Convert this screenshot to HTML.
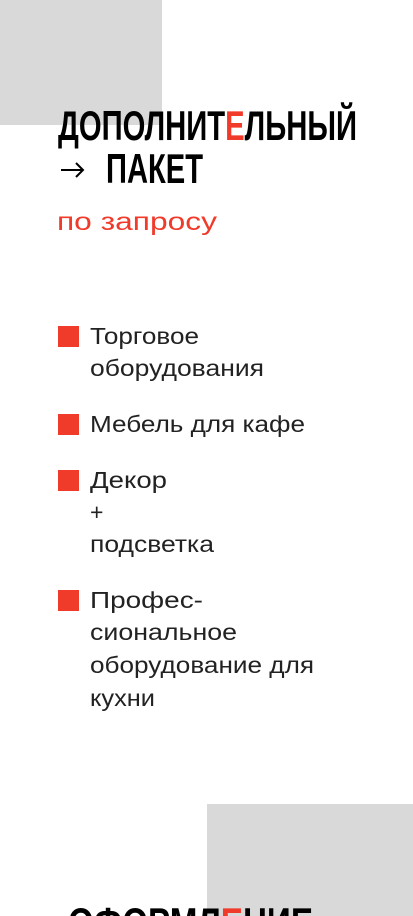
<!DOCTYPE html>
<html><head><meta charset="utf-8"><style>
html,body{margin:0;padding:0;background:#fff;width:413px;height:916px;overflow:hidden;}
svg{display:block}
</style></head><body>
<svg width="413" height="916" viewBox="0 0 413 916" xmlns="http://www.w3.org/2000/svg">
<rect x="0" y="0" width="162" height="125" fill="#d9d9d9"/>
<rect x="207" y="804" width="206" height="112" fill="#d9d9d9"/>
<g font-family="'Liberation Sans Narrow','Liberation Sans',sans-serif" font-weight="bold" font-size="42" fill="#000">
<text x="58" y="140" textLength="299" lengthAdjust="spacingAndGlyphs">ДОПОЛНИТ<tspan fill="#f03a2a">Е</tspan>ЛЬНЫЙ</text>
<text x="106" y="183" textLength="97" lengthAdjust="spacingAndGlyphs">ПАКЕТ</text>
<text x="68" y="937" textLength="245" lengthAdjust="spacingAndGlyphs">ОФОРМЛ<tspan fill="#f03a2a">Е</tspan>НИЕ</text>
</g>
<g stroke="#000" stroke-width="2" fill="none">
<line x1="61" y1="170" x2="83" y2="170"/>
<polyline points="76,163 83,170 76,177"/>
</g>
<text x="57" y="230" font-family="'Liberation Sans',sans-serif" font-size="25" fill="#f03a2a" textLength="160" lengthAdjust="spacingAndGlyphs">по запросу</text>
<g fill="#f03a2a">
<rect x="58" y="326" width="21" height="21"/>
<rect x="58" y="414" width="21" height="21"/>
<rect x="58" y="470" width="21" height="21"/>
<rect x="58" y="590" width="21" height="21"/>
</g>
<g font-family="'Liberation Sans',sans-serif" font-size="23" fill="#222" lengthAdjust="spacingAndGlyphs">
<text x="90" y="344" textLength="109" lengthAdjust="spacingAndGlyphs">Торговое</text>
<text x="90" y="376" textLength="174" lengthAdjust="spacingAndGlyphs">оборудования</text>
<text x="90" y="432" textLength="215" lengthAdjust="spacingAndGlyphs">Мебель для кафе</text>
<text x="90" y="488" textLength="77" lengthAdjust="spacingAndGlyphs">Декор</text>
<text x="90" y="520">+</text>
<text x="90" y="552" textLength="124" lengthAdjust="spacingAndGlyphs">подсветка</text>
<text x="90" y="608" textLength="113" lengthAdjust="spacingAndGlyphs">Профес-</text>
<text x="90" y="640" textLength="147" lengthAdjust="spacingAndGlyphs">сиональное</text>
<text x="90" y="673" textLength="224" lengthAdjust="spacingAndGlyphs">оборудование для</text>
<text x="90" y="706" textLength="65" lengthAdjust="spacingAndGlyphs">кухни</text>
</g>
</svg>
</body></html>
